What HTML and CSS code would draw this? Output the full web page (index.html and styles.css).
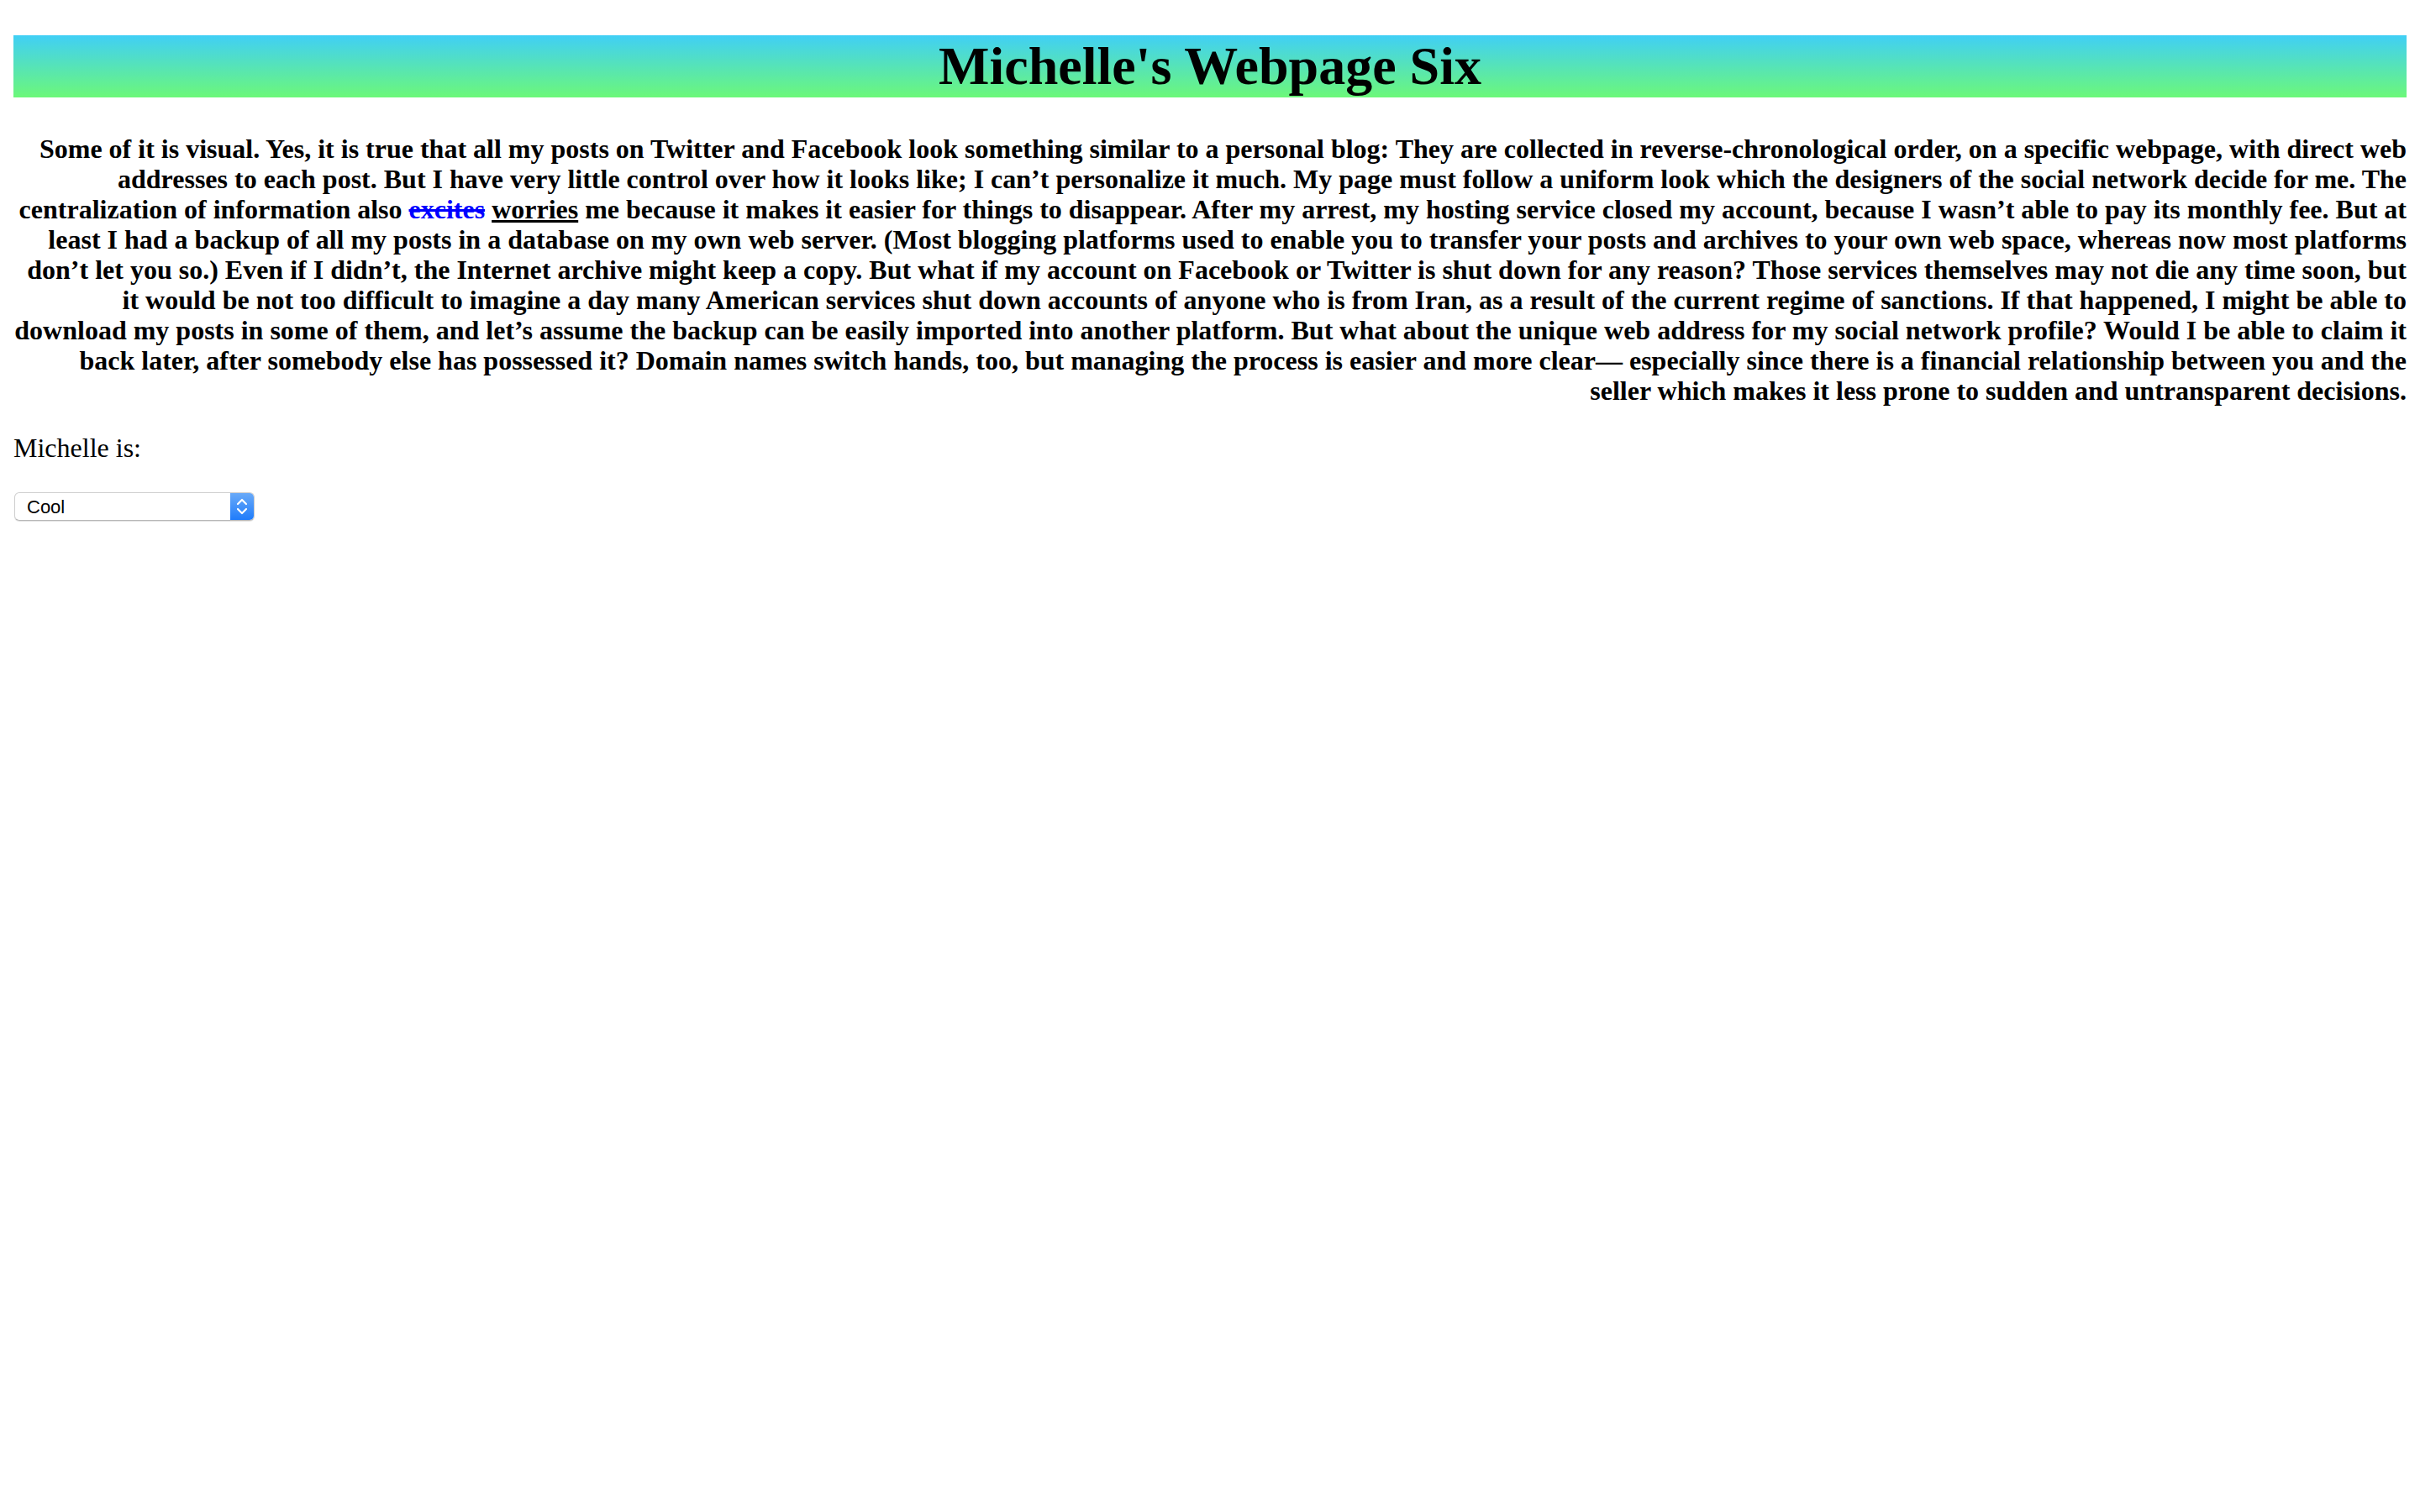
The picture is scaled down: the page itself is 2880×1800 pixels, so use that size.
FILE: index.html
```html
<!DOCTYPE html>
<html>
<head>
<meta charset="utf-8">
<title>Michelle's Webpage Six</title>
<link rel="stylesheet" href="styles.css">
</head>
<body>
<h1 class="title">Michelle's Webpage Six</h1>
<p class="essay">Some of it is visual. Yes, it is true that all my posts on Twitter and Facebook look something similar to a personal blog: They are collected in reverse-chronological order, on a specific webpage, with direct web addresses to each post. But I have very little control over how it looks like; I can’t personalize it much. My page must follow a uniform look which the designers of the social network decide for me. The centralization of information also <del class="struck">excites</del> <ins class="inserted">worries</ins> me because it makes it easier for things to disappear. After my arrest, my hosting service closed my account, because I wasn’t able to pay its monthly fee. But at least I had a backup of all my posts in a database on my own web server. (Most blogging platforms used to enable you to transfer your posts and archives to your own web space, whereas now most platforms don’t let you so.) Even if I didn’t, the Internet archive might keep a copy. But what if my account on Facebook or Twitter is shut down for any reason? Those services themselves may not die any time soon, but it would be not too difficult to imagine a day many American services shut down accounts of anyone who is from Iran, as a result of the current regime of sanctions. If that happened, I might be able to download my posts in some of them, and let’s assume the backup can be easily imported into another platform. But what about the unique web address for my social network profile? Would I be able to claim it back later, after somebody else has possessed it? Domain names switch hands, too, but managing the process is easier and more clear— especially since there is a financial relationship between you and the seller which makes it less prone to sudden and untransparent decisions.</p>
<div class="label">Michelle is:</div>
<div class="select-wrap">
  <select class="select">
    <option>Cool</option>
    <option>Smart</option>
    <option>Funny</option>
  </select>
  <span class="select-arrow">
    <svg width="14" height="22" viewBox="0 0 14 22">
      <path d="M2 8 L7 3 L12 8" fill="none" stroke="#fff" stroke-width="2.2" stroke-linecap="round" stroke-linejoin="round"/>
      <path d="M2 14 L7 19 L12 14" fill="none" stroke="#fff" stroke-width="2.2" stroke-linecap="round" stroke-linejoin="round"/>
    </svg>
  </span>
</div>
</body>
</html>
```
FILE: styles.css
```css
html {
  margin: 0;
  padding: 0;
  background: #ffffff;
}
body {
  margin: 0;
  padding: 0 16px 16px;
  font-family: "Liberation Serif", "Times New Roman", serif;
  font-size: 32px;
  color: #000;
  background: #ffffff;
}
.title {
  margin: 42px 0 0;
  padding: 0;
  font-size: 64px;
  line-height: 74px;
  font-weight: bold;
  text-align: center;
  background: linear-gradient(to bottom, #40cff6, #6cf879);
}
.essay {
  margin: 43px 0 32px;
  font-weight: bold;
  line-height: 36px;
  text-align: right;
}
.struck {
  color: #0000ff;
  text-decoration: line-through;
}
.inserted {
  text-decoration: underline;
}
.label {
  line-height: 36px;
}
.select-wrap {
  display: inline-flex;
  margin-top: 35px;
  margin-left: 1px;
  width: 286px;
  height: 34px;
  box-sizing: border-box;
  border: 1px solid #cfcfcf;
  border-bottom-color: #b8b8b8;
  border-radius: 6px;
  overflow: hidden;
  box-shadow: 0 1px 1px rgba(0,0,0,0.12);
  background: #fff;
}
.select {
  appearance: none;
  -webkit-appearance: none;
  flex: 1;
  border: none;
  outline: none;
  background: transparent;
  margin: 0;
  padding: 0 0 0 14px;
  font-family: "Liberation Sans", Arial, sans-serif;
  font-size: 22px;
  color: #000;
  height: 100%;
}
.select-arrow {
  width: 28px;
  display: flex;
  align-items: center;
  justify-content: center;
  background: linear-gradient(to bottom, #6aaaf8, #1f7cfb);
}
```
